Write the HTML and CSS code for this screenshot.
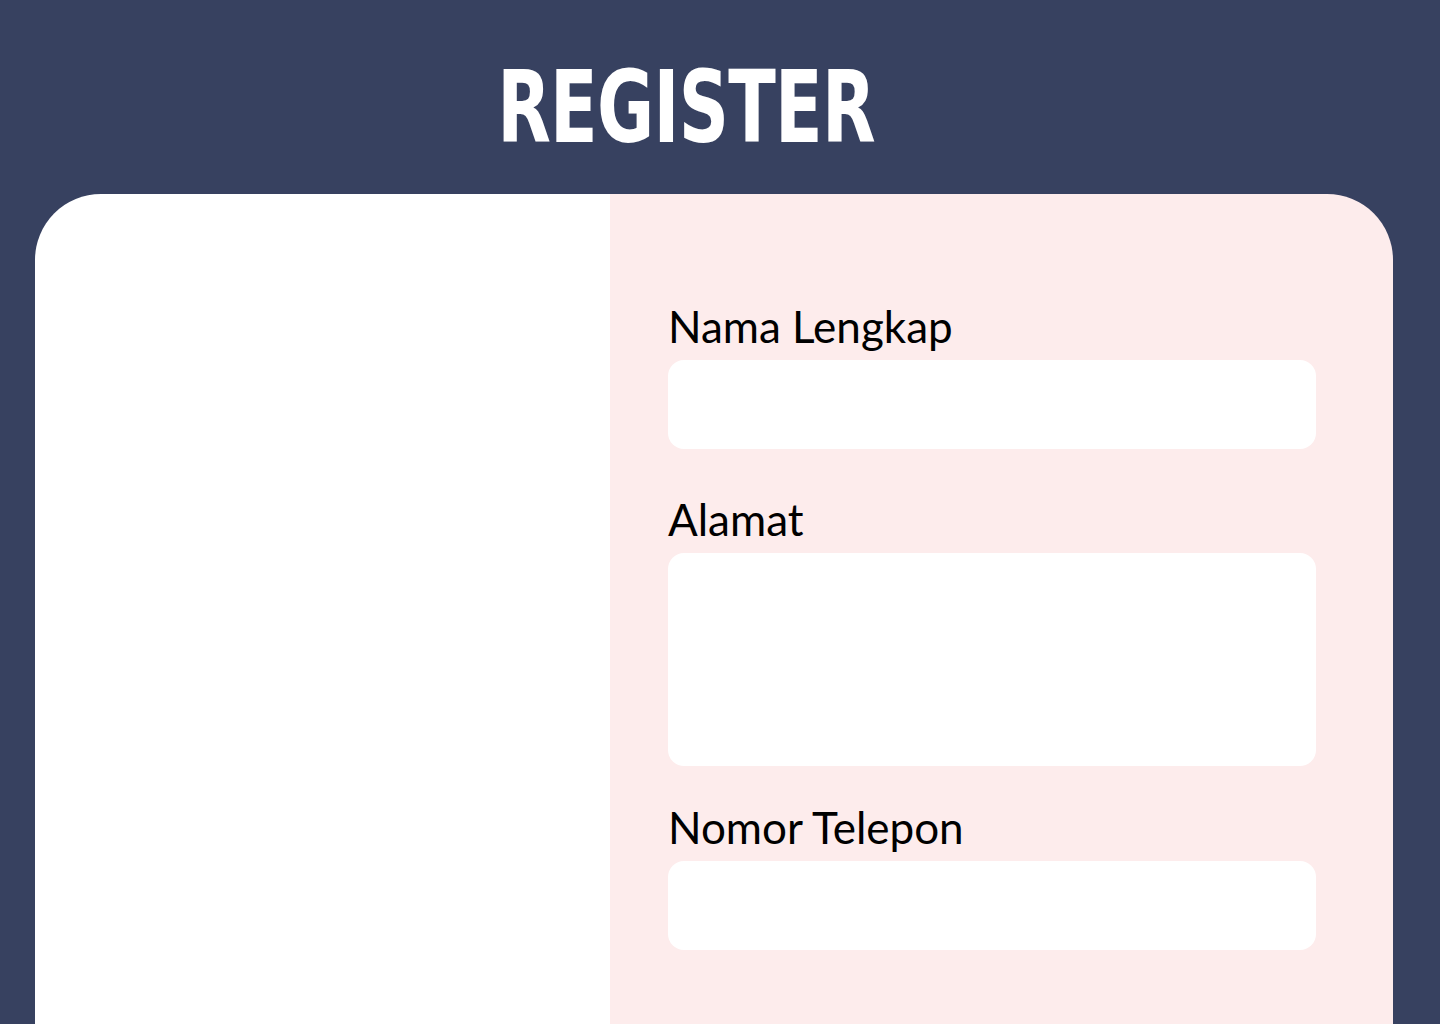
FILE: index.html
```html
<!DOCTYPE html>
<html lang="id">
<head>
<meta charset="utf-8">
<title>Register</title>
<link rel="stylesheet" href="styles.css">
</head>
<body>
<header class="header">
  <h1 class="title">REGISTER</h1>
</header>
<main class="card">
  <section class="card-left"></section>
  <section class="card-right">
    <form class="form">
      <div class="field">
        <label class="label" for="nama">Nama Lengkap</label>
        <input class="input" id="nama" type="text">
      </div>
      <div class="field field-second">
        <label class="label" for="alamat">Alamat</label>
        <textarea class="input textarea" id="alamat"></textarea>
      </div>
      <div class="field field-third">
        <label class="label" for="telp">Nomor Telepon</label>
        <input class="input" id="telp" type="text">
      </div>
    </form>
  </section>
</main>
</body>
</html>
```
FILE: styles.css
```css
* { box-sizing: border-box; }
html, body { margin: 0; padding: 0; }
body {
  background: #374160;
  width: 1440px;
  height: 1024px;
  overflow: hidden;
  font-family: "Lato", "Noto Sans", sans-serif;
}
.header {
  height: 194px;
  display: flex;
  justify-content: center;
  align-items: flex-start;
  padding-right: 68px;
}
.title {
  margin: 0;
  padding-top: 48px;
  color: #ffffff;
  font-family: "DejaVu Sans", sans-serif;
  font-weight: 700;
  font-size: 100px;
  line-height: 120px;
  letter-spacing: -1px;
  transform: scaleX(0.697);
}
.card {
  margin-left: 35px;
  width: 1358px;
  min-height: 900px;
  display: grid;
  grid-template-columns: 575px 1fr;
  border-radius: 66px 66px 0 0;
  overflow: hidden;
}
.card-left { background: #ffffff; }
.card-right {
  background: #fdecec;
  padding: 104px 0 0 58px;
}
.form {
  display: flex;
  flex-direction: column;
  width: 648px;
}
.field {
  display: flex;
  flex-direction: column;
  gap: 6px;
}
.field-second { margin-top: 42px; }
.field-third { margin-top: 33px; }
.label {
  font-size: 44px;
  line-height: 56px;
  color: #000;
}
.input {
  display: block;
  width: 648px;
  height: 89px;
  border: none;
  border-radius: 16px;
  background: #ffffff;
  outline: none;
  font: inherit;
  font-size: 24px;
  padding: 0 20px;
}
.textarea {
  height: 213px;
  resize: none;
  padding: 20px;
}
```
